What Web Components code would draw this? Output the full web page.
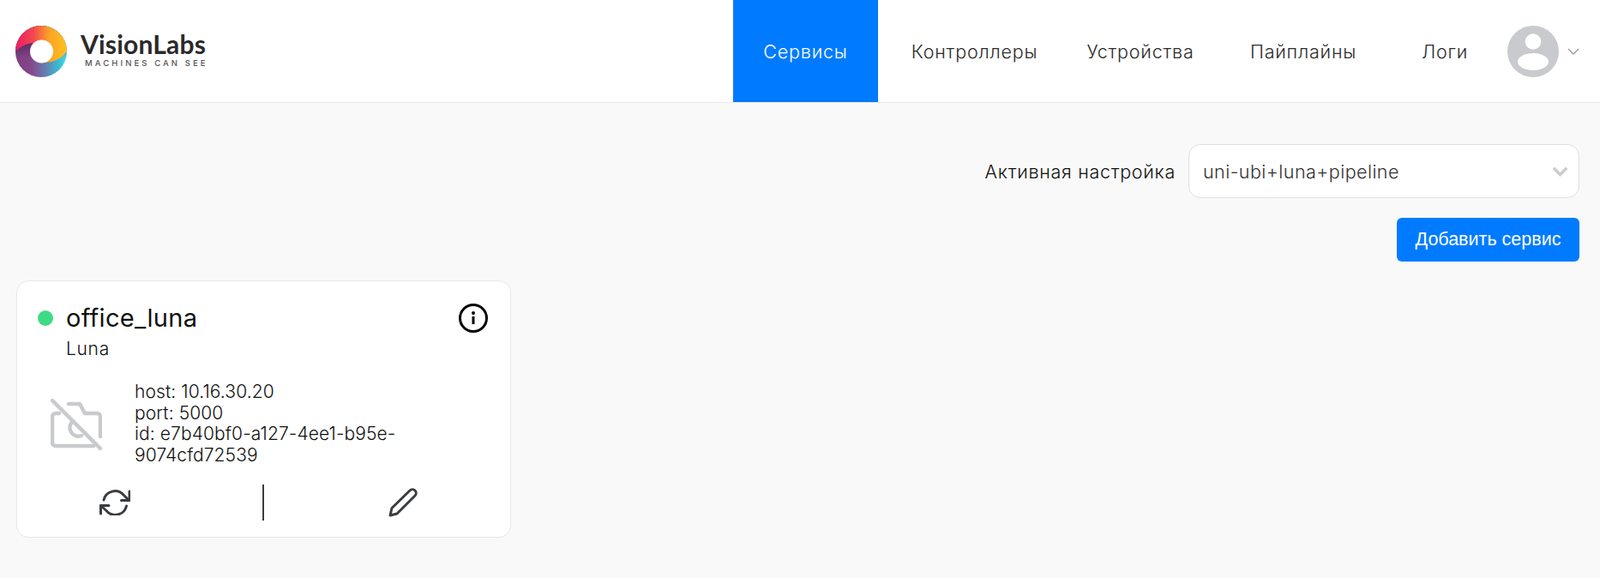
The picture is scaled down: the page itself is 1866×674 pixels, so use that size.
<!DOCTYPE html>
<html lang="ru">
<head>
<meta charset="utf-8">
<title>Сервисы</title>
<style>
    body {
        margin: 0;
        background: #f9f9f9;
        font-family: "Inter", "Noto Sans", sans-serif;
        color: #111;
    }
</style>
</head>
<body>
<vl-header>
    <vl-logo slot="logo"></vl-logo>
    <vl-nav-item width="169" active>Сервисы</vl-nav-item>
    <vl-nav-item width="225">Контроллеры</vl-nav-item>
    <vl-nav-item width="162">Устройства</vl-nav-item>
    <vl-nav-item width="218">Пайплайны</vl-nav-item>
    <vl-nav-item width="112">Логи</vl-nav-item>
    <vl-user-menu></vl-user-menu>
</vl-header>
<vl-page>
    <vl-setting label="Активная настройка" value="uni-ubi+luna+pipeline"></vl-setting>
    <vl-button>Добавить сервис</vl-button>
    <vl-service-card name="office_luna" type="Luna">
        <div>host: 10.16.30.20</div>
        <div>port: 5000</div>
        <div>id: e7b40bf0-a127-4ee1-b95e-9074cfd72539</div>
    </vl-service-card>
</vl-page>

<script>
function define(name, html, init) {
    const template = document.createElement('template');
    template.innerHTML = html;
    customElements.define(name, class extends HTMLElement {
        constructor() {
            super();
            this.attachShadow({ mode: 'open' });
            this.shadowRoot.appendChild(template.content.cloneNode(true));
        }
        connectedCallback() {
            if (init) init(this, this.shadowRoot);
        }
    });
}

define('vl-header', `
    <style>
        :host {
            display: flex;
            height: 119px;
            background: #fff;
            border-bottom: 1px solid #e8e8e8;
        }
        .logo { display: flex; flex: 1; align-items: center; }
        nav { display: flex; margin-right: 24px; }
    </style>
    <div class="logo"><slot name="logo"></slot></div>
    <nav><slot></slot></nav>
`);

define('vl-logo', `
    <style>
        :host { display: flex; align-items: center; margin-left: 18px; }
        svg { display: block; width: 60px; height: 60px; }
        .text { margin-left: 16px; margin-bottom: 2px; }
        .name {
            font: 700 30px/30px "Lato", sans-serif;
            color: #2a2a2a;
            letter-spacing: 0.2px;
            margin-top: -1px;
        }
        .motto {
            font: 500 9.5px/12px "Inter", sans-serif;
            color: #555;
            letter-spacing: 3.1px;
            margin: 2px 0 0 5px;
            white-space: nowrap;
        }
    </style>
    <svg viewBox="0 0 60 60">
        <defs>
            <linearGradient id="top" x1="0" x2="1" y1="0" y2="0">
                <stop offset="0" stop-color="#ec1c66"/>
                <stop offset=".35" stop-color="#f2474f"/>
                <stop offset=".65" stop-color="#fca226"/>
                <stop offset="1" stop-color="#ffc320"/>
            </linearGradient>
            <linearGradient id="bottom" x1="0" x2="1" y1="0" y2="0">
                <stop offset="0" stop-color="#7b3f7f"/>
                <stop offset=".3" stop-color="#86468a"/>
                <stop offset=".62" stop-color="#5f86b6"/>
                <stop offset=".85" stop-color="#36bfd8"/>
                <stop offset="1" stop-color="#4bd8e6"/>
            </linearGradient>
            <linearGradient id="shade" x1="0" x2="0" y1="0" y2="1">
                <stop offset=".3" stop-color="#4a2250" stop-opacity=".75"/>
                <stop offset=".62" stop-color="#4a2250" stop-opacity="0"/>
            </linearGradient>
        </defs>
        <circle cx="30" cy="30" r="30" fill="url(#bottom)"/>
        <circle cx="30" cy="30" r="30" fill="url(#shade)"/>
        <path d="M0 30A30 30 0 0 1 60 30C54 38 44 43 34 43L20 20C12 21 5 25 0 30Z" fill="url(#top)"/>
        <circle cx="30.5" cy="30" r="13.5" fill="#fff"/>
    </svg>
    <div class="text">
        <div class="name">VisionLabs</div>
        <div class="motto">MACHINES CAN SEE</div>
    </div>
`);

define('vl-nav-item', `
    <style>
        :host {
            display: flex;
            align-items: center;
            justify-content: center;
            font-size: 21.5px;
            letter-spacing: 0.8px;
            font-weight: 300;
            color: #2c2c2c;
            height: 119px;
        }
        :host([active]) { background: #007bff; color: #fff; }
    </style>
    <slot></slot>
`, (el) => {
    el.style.width = el.getAttribute('width') + 'px';
});

define('vl-user-menu', `
    <style>
        :host { display: flex; align-items: center; margin-left: 17px; gap: 10px; }
        svg { display: block; }
    </style>
    <svg width="60" height="60" viewBox="0 0 60 60">
        <circle cx="30" cy="30" r="30" fill="#c9cacd"/>
        <circle cx="30" cy="18.5" r="9.3" fill="#fff"/>
        <ellipse cx="30" cy="42" rx="18" ry="10" fill="#fff"/>
    </svg>
    <svg width="14" height="8" viewBox="0 0 14 8">
        <path d="M1 1l6 6 6-6" fill="none" stroke="#9a9aa0" stroke-width="1.4"/>
    </svg>
`);

define('vl-page', `
    <style>
        :host {
            display: flex;
            flex-direction: column;
            padding: 48px 24px 47px 19px;
        }
    </style>
    <slot></slot>
`);

define('vl-setting', `
    <style>
        :host {
            display: flex;
            justify-content: flex-end;
            align-items: center;
            gap: 15px;
            font-size: 21.5px;
            letter-spacing: 0.72px;
            font-weight: 300;
        }
        .select {
            display: flex;
            align-items: center;
            justify-content: space-between;
            box-sizing: border-box;
            width: 456px;
            height: 63px;
            padding: 0 12px 0 16px;
            background: #fff;
            border: 1px solid #dfdfe3;
            border-radius: 14px;
            color: #333;
        }
        .value { letter-spacing: 0.45px; }
    </style>
    <span class="label"></span>
    <div class="select">
        <span class="value"></span>
        <svg width="19" height="12" viewBox="0 0 19 12">
            <path d="M1.8 1.8l7.7 7.7 7.7-7.7" fill="none" stroke="#ccc" stroke-width="3.6"/>
        </svg>
    </div>
`, (el, root) => {
    root.querySelector('.label').textContent = el.getAttribute('label');
    root.querySelector('.value').textContent = el.getAttribute('value');
});

define('vl-button', `
    <style>
        :host {
            display: flex;
            align-self: flex-end;
            align-items: center;
            justify-content: center;
            box-sizing: border-box;
            width: 213px;
            height: 51px;
            margin-top: 23px;
            background: #007bff;
            border-radius: 6px;
            color: #fff;
            font: 21.5px "Liberation Sans", sans-serif;
        }
    </style>
    <slot></slot>
`);

define('vl-service-card', `
    <style>
        :host {
            display: block;
            box-sizing: border-box;
            width: 577px;
            height: 300px;
            margin-top: 22px;
            padding: 24px 26px 0 24px;
            background: #fff;
            border: 1px solid #e8e8e8;
            border-radius: 14px;
        }
        .head { display: flex; align-items: center; }
        .dot {
            width: 18px;
            height: 18px;
            border-radius: 50%;
            background: #3ddc84;
            margin-right: 15px;
        }
        .name { flex: 1; font-size: 29px; letter-spacing: 0.3px; line-height: 38px; font-weight: 400; }
        .head svg { margin-top: -1px; }
        .type { margin: 4px 0 0 33px; font-size: 21px; letter-spacing: 0.7px; line-height: 26px; font-weight: 300; }
        .body { display: flex; margin-top: 25px; }
        .body svg { flex: none; margin: 20px 0 0 15px; }
        .props {
            margin-left: 38px;
            width: 330px;
            font-size: 21px;
            letter-spacing: 0.1px;
            line-height: 24.7px;
            font-weight: 300;
        }
        .actions {
            display: flex;
            align-items: center;
            margin: 21px 0 0 0;
            height: 42px;
        }
        .actions .left {
            flex: none;
            display: flex;
            box-sizing: border-box;
            width: 262px;
            padding-left: 72px;
        }
        .actions .right { flex: 1; display: flex; padding-left: 145px; }
        .actions .sep { flex: none; width: 2px; height: 42px; background: #3a3d40; }
    </style>
    <div class="head">
        <span class="dot"></span>
        <span class="name"></span>
        <svg width="34" height="34" viewBox="0 0 34 34">
            <circle cx="17" cy="17" r="15.5" fill="none" stroke="#000" stroke-width="3"/>
            <circle cx="17" cy="11" r="2" fill="#000"/>
            <path d="M17 15v9" stroke="#000" stroke-width="3"/>
        </svg>
    </div>
    <div class="type"></div>
    <div class="body">
        <svg width="60" height="60" viewBox="0 0 60 60" fill="none" stroke="#c9cacd" stroke-width="4.5" stroke-linecap="round" stroke-linejoin="round">
            <path d="M2 2l56 56"/>
            <path d="M21 6h13l6 11h14a4 4 0 0 1 4 4v23"/>
            <path d="M50 55H6a4 4 0 0 1-4-4V21a4 4 0 0 1 4-4h4"/>
            <path d="M25 27a10 10 0 0 0 11 16"/>
        </svg>
        <div class="props"><slot></slot></div>
    </div>
    <div class="actions">
        <div class="left">
            <svg width="36" height="30" viewBox="0 0 36 30" fill="none" stroke="#3a3d40" stroke-width="3" stroke-linecap="round" stroke-linejoin="round">
                <path d="M5 12A13.5 13.5 0 0 1 28 6L34.5 12.5"/>
                <path d="M35 2v10.5H25.5"/>
                <path d="M31.5 19A13.5 13.5 0 0 1 8 24.5L1.5 18.5"/>
                <path d="M1.5 28V18.5H11"/>
            </svg>
        </div>
        <span class="sep"></span>
        <div class="right">
            <svg width="34" height="34" viewBox="0 0 34 34" fill="none" stroke="#3a3d40" stroke-width="3" stroke-linejoin="round">
                <path d="M2 32L4 23.5L25 3A4 4 0 0 1 31 9L10 30Z"/>
            </svg>
        </div>
    </div>
`, (el, root) => {
    root.querySelector('.name').textContent = el.getAttribute('name');
    root.querySelector('.type').textContent = el.getAttribute('type');
});
</script>
</body>
</html>
